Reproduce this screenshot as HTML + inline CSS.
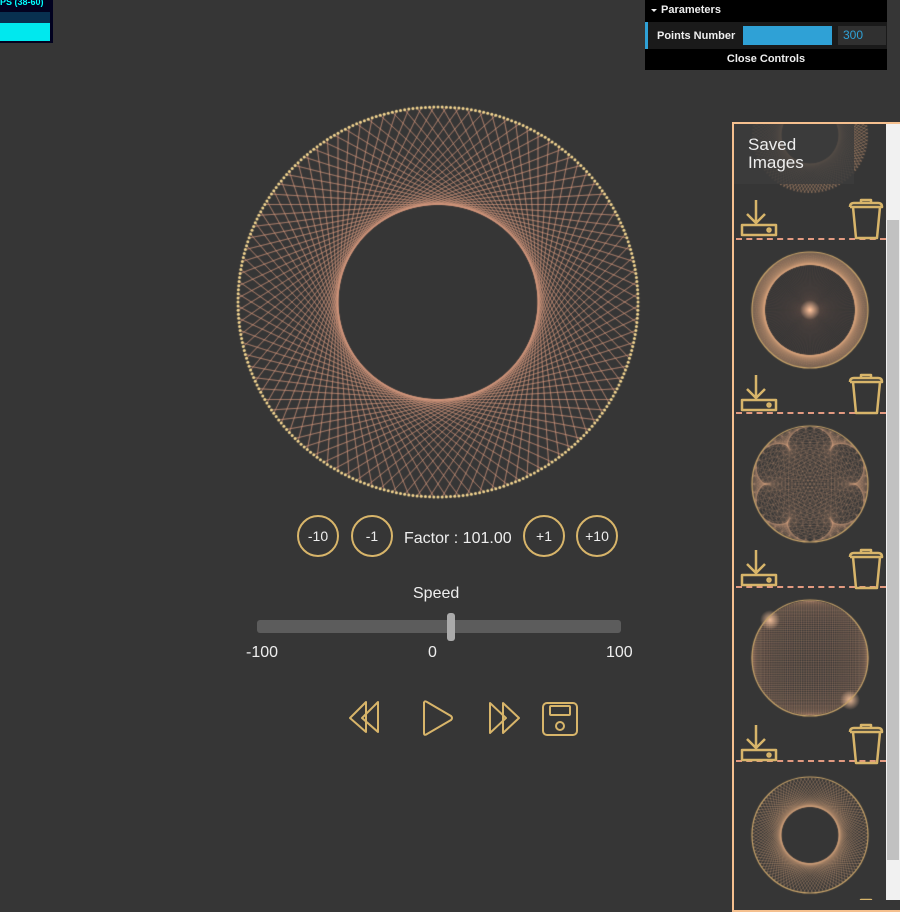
<!DOCTYPE html>
<html><head><meta charset="utf-8"><style>
html,body{margin:0;padding:0;width:900px;height:900px;overflow:hidden;background:#363636;font-family:"Liberation Sans",sans-serif}
#main{position:absolute;left:0;top:0}
.stats{position:absolute;left:0;top:0;width:53px;height:43px;background:#020220}
.stats .t{position:absolute;left:0;top:-3px;color:#0ff;font-size:9px;font-weight:bold}
.stats .g{position:absolute;left:0;top:12px;width:50px;height:16px;background:#083050}
.stats .g2{position:absolute;left:0;top:23px;width:50px;height:18px;background:#00e8ee}
.gui{position:absolute;left:645px;top:0;width:242px;height:70px;background:#000}
.gui .h{height:22px;color:#eee;font-size:11px;font-weight:bold;line-height:20px;padding-left:16px;position:relative}
.gui .h:before{content:"";position:absolute;left:6px;top:9px;border-left:3px solid transparent;border-right:3px solid transparent;border-top:3px solid #eee}
.gui .row{height:27px;background:#1a1a1a;border-left:3px solid #2fa1d6;position:relative;color:#eee;font-size:11px;font-weight:bold}
.gui .row span{position:absolute;left:9px;top:8px}
.gui .bar{position:absolute;left:95px;top:4px;width:89px;height:19px;background:#2fa1d6}
.gui .num{position:absolute;left:190px;top:4px;width:48px;height:19px;background:#303030;color:#2fa1d6;font-size:12px;line-height:19px;padding-left:5px;box-sizing:border-box;font-weight:normal}
.gui .cl{height:20px;color:#eee;font-size:11px;font-weight:bold;text-align:center;line-height:20px}
.btn{position:absolute;width:42px;height:42px;border:2px solid #d8b56a;border-radius:50%;box-sizing:border-box;color:#eee;font-size:14px;text-align:center;line-height:38px}
.txt{position:absolute;color:#eee;font-size:16px}
.side{position:absolute;left:732px;top:122px;width:168px;height:790px;border:2px solid #f5c08f;border-right:none;box-sizing:border-box;overflow:hidden}
.sb{position:absolute;left:886px;top:124px;width:14px;height:776px;background:#f1f1f1}
.sb .th{position:absolute;left:1px;top:96px;width:12px;height:640px;background:#c1c1c1}
.dash{position:absolute;left:736px;width:150px;height:0;border-top:2px dashed #e39a80}
.hdr{position:absolute;left:734px;top:124px;width:120px;height:60px;background:rgba(60,60,60,.85);color:#eee;font-size:17px;line-height:18px;padding:12px 0 0 14px;box-sizing:border-box}
</style></head><body>
<canvas id="main" width="900" height="900"></canvas>
<div class="stats"><div class="t">PS (38-60)</div><div class="g"></div><div class="g2"></div></div>
<div class="gui"><div class="h">Parameters</div><div class="row"><span>Points Number</span><div class="bar"></div><div class="num">300</div></div><div class="cl">Close Controls</div></div>

<div class="btn" style="left:297px;top:515px">-10</div>
<div class="btn" style="left:351px;top:515px">-1</div>
<div class="txt" style="left:404px;top:530px">Factor : 101.00</div>
<div class="btn" style="left:523px;top:515px">+1</div>
<div class="btn" style="left:576px;top:515px">+10</div>
<div class="txt" style="left:413px;top:585px">Speed</div>
<div style="position:absolute;left:257px;top:620px;width:364px;height:13px;background:#5c5c5c;border-radius:3px"></div>
<div style="position:absolute;left:447px;top:613px;width:8px;height:28px;background:#aaa;border-radius:3px"></div>
<div class="txt" style="left:246px;top:644px">-100</div>
<div class="txt" style="left:428px;top:644px">0</div>
<div class="txt" style="left:606px;top:644px">100</div>
<svg style="position:absolute;left:340px;top:695px" width="250" height="50" fill="none" stroke="#d8b56a" stroke-width="2" stroke-linejoin="round">
<path d="M10 23 L26 7 L26 37 Z M22 23 L38 7 L38 37 Z"/>
<path d="M84 7 L84 38 Q84 41 87 39 L111 25 Q113 23 111 21 L87 7 Q84 5 84 9"/>
<path d="M150 8 L150 38 L166 23 Z M163 8 L163 38 L179 23 Z"/>
<rect x="203" y="8" width="34" height="32" rx="4"/><rect x="210" y="11" width="20" height="9" rx="1"/><circle cx="220" cy="31" r="4"/>
</svg>

<div class="side"></div>
<div class="dash" style="top:238px"></div><div class="dash" style="top:412px"></div><div class="dash" style="top:586px"></div><div class="dash" style="top:760px"></div>
<svg style="position:absolute;left:736px;top:195px" width="150" height="705" fill="none" stroke="#d8b56a" stroke-width="2.5" stroke-linejoin="round">
<g id="ic"><path d="M20 5 V28 M11 19 L20 28 L29 19 M6 30 V40 H40 V30 Z M6 30 H12 M28 30 H40"/><circle cx="33" cy="35" r="1.5"/>
<path d="M114 12 H146 Q146 8 142 8 H118 Q114 8 114 12 M125 8 V5 H135 V8 M117 12 L120 43 H141 L144 12"/></g>
<use href="#ic" y="175"/><use href="#ic" y="350"/><use href="#ic" y="525"/><use href="#ic" y="700"/>
</svg>
<div class="hdr">Saved<br>Images</div>
<div class="sb"><div class="th"></div></div>
<script>
var c=document.getElementById('main').getContext('2d');
function tt(cx,cy,rx,ry,N,k,col,a,dots,lw){
 c.strokeStyle=col;c.globalAlpha=a;c.lineWidth=lw||1;c.beginPath();
 for(var i=0;i<N;i++){var t1=Math.PI/2+2*Math.PI*i/N,t2=Math.PI/2+2*Math.PI*((i*k)%N)/N;
 c.moveTo(cx+rx*Math.cos(t1),cy+ry*Math.sin(t1));c.lineTo(cx+rx*Math.cos(t2),cy+ry*Math.sin(t2));}
 c.stroke();c.globalAlpha=1;
 if(dots){c.fillStyle='#f3d590';for(var i=0;i<N;i++){var t=2*Math.PI*i/N;c.beginPath();c.arc(cx+rx*Math.cos(t),cy+ry*Math.sin(t),dots,0,7);c.fill();}}
}
function ring(cx,cy,r,N,m,col,a){c.strokeStyle=col;c.globalAlpha=a;c.lineWidth=0.5;c.beginPath();
 for(var i=0;i<N;i++){var t1=2*Math.PI*i/N,t2=2*Math.PI*(i+m)/N;c.moveTo(cx+r*Math.cos(t1),cy+r*Math.sin(t1));c.lineTo(cx+r*Math.cos(t2),cy+r*Math.sin(t2));}
 c.stroke();c.globalAlpha=1;}
tt(438,302,200,195,300,101,'#d99a7e',0.55,1.5,0.8);
function glow(x,y,r){var g=c.createRadialGradient(x,y,0,x,y,r);g.addColorStop(0,'rgba(255,200,160,0.9)');g.addColorStop(1,'rgba(255,200,160,0)');c.fillStyle=g;c.beginPath();c.arc(x,y,r,0,7);c.fill();}
c.save();c.beginPath();c.rect(734,124,152,114);c.clip();tt(810,135,58,58,300,101,'#d9a47d',0.45,0,0.5);c.restore();
tt(810,310,58,56,300,151,'#d9a47d',0.08,0,0.5);ring(810,310,58,300,64,'#d9a47d',0.45);glow(810,310,10);
tt(810,484,58,57,300,7,'#d9a47d',0.35,0,0.5);
tt(810,658,58,57,300,149,'#d9a47d',0.3,0,0.5);glow(770,620,10);glow(850,700,10);
tt(810,835,58,57,300,101,'#d9a47d',0.4,0,0.5);
[[810,310],[810,484],[810,658],[810,835]].forEach(function(p){c.strokeStyle='#c9a46a';c.lineWidth=1.2;c.beginPath();c.arc(p[0],p[1],58,0,7);c.stroke();});
</script>
</body></html>
